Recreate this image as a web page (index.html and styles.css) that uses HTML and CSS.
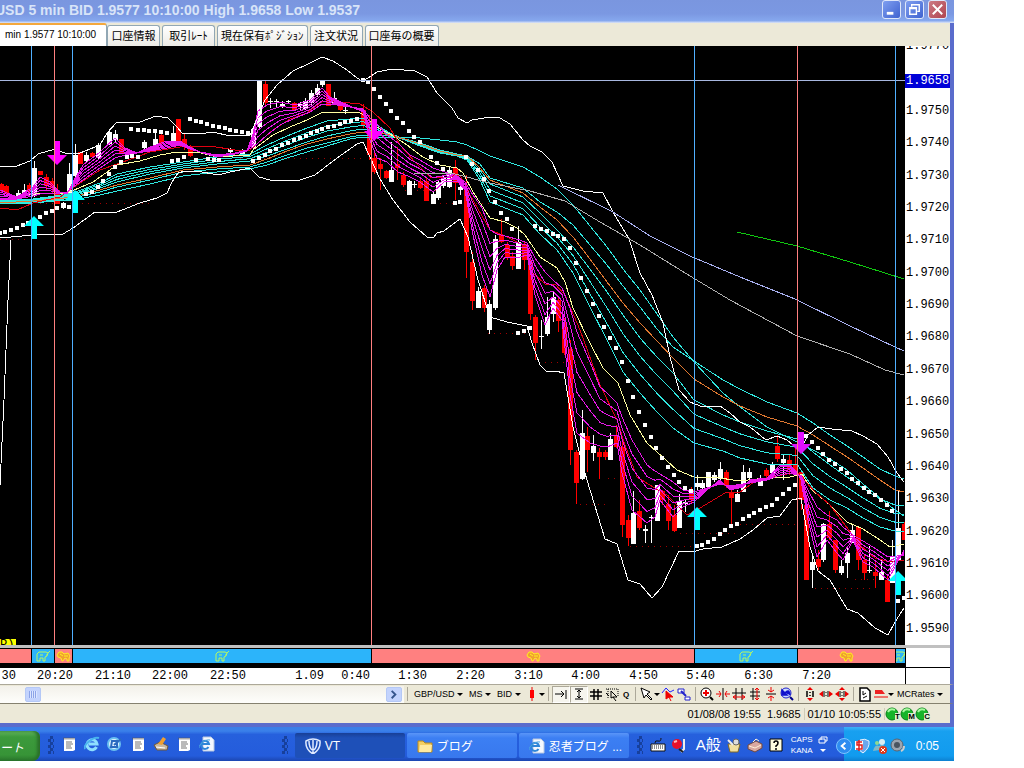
FILE: index.html
```
<!DOCTYPE html>
<html lang="ja">
<head>
    <meta charset="UTF-8">
    <meta name="viewport" content="width=device-width, initial-scale=1.0">
    <title>VT</title>
    <link rel="stylesheet" href="styles.css">
</head>
<body>
    <svg class="defs" aria-hidden="true">
        <symbol id="bull" viewBox="0 0 15 12"><path d="M1 11V4l2-2h7l2 1 2-2M12 3l-1 3-2 1v4H7V8H4v3H1M4 5h3M10 5h1" fill="none" stroke="#b8f860"/></symbol>
        <symbol id="bear" viewBox="0 0 15 12"><path d="M1 5l2-3h3l2 2 4-1 2 3-1 2v3h-2V9l-2-1-2 3H6L5 8 2 7zM4 4l3 2M8 6l4 0" fill="#f0a030" stroke="#ffee20"/></symbol>
        <symbol id="note" viewBox="0 0 16 16"><path d="M3 2h11v12l-2 1H3z" fill="#fff"/><path d="M3 1.500v2M5 1.500v2M7 1.500v2M9 1.500v2M11 1.500v2M13 1.500v2" stroke="#555"/><path d="M5 6h6M5 8h7M5 10h5M5 12h6" stroke="#777"/></symbol>
        <symbol id="ie" viewBox="0 0 16 16"><path d="M12.500 11A5 5 0 1 1 13 8H5" fill="none" stroke="#8fe0ff" stroke-width="3"/><path d="M1 13C-1 9 9 0 15 2" fill="none" stroke="#49b4ee" stroke-width="2"/></symbol>
        <symbol id="iepage" viewBox="0 0 16 16"><path d="M4 1h8l3 3v11H4z" fill="#f4f8ff" stroke="#b8c8e0"/><path d="M9.500 11A4 4 0 1 1 10 8H3" fill="none" stroke="#2f86d8" stroke-width="2"/><path d="M0 12C0 8 6 3 11 4" fill="none" stroke="#49a4e0"/></symbol>
        <symbol id="lamp" viewBox="0 0 15 14"><circle cx="7" cy="7" r="6" fill="#16b42a" stroke="#088018"/><path d="M3 5q2-4 7-2" stroke="#a8f8a0" stroke-width="2" fill="none"/></symbol>
    </svg>

    <main class="window">
        <header class="titlebar">
            <h1>USD 5 min BID 1.9577 10:10:00 High 1.9658 Low 1.9537</h1>
            <div class="winButtons">
                <button class="winBtn" aria-label="Minimize"><svg viewBox="0 0 18 18"><path d="M4 13h7" stroke="#fff" stroke-width="3"/></svg></button>
                <button class="winBtn" aria-label="Restore"><svg viewBox="0 0 18 18"><path d="M6 6V4h8v7h-2M4 7h7v7H4zM4 8h7M6 4h8" fill="none" stroke="#fff" stroke-width="1.500"/></svg></button>
                <button class="winBtn close" aria-label="Close"><svg viewBox="0 0 18 18"><path d="M4 4l10 10M14 4L4 14" stroke="#fff" stroke-width="2"/></svg></button>
            </div>
        </header>

        <nav class="tabs">
            <button class="tab active">min 1.9577 10:10:00</button>
            <button class="tab">口座情報</button>
            <button class="tab">取引ﾚｰﾄ</button>
            <button class="tab">現在保有ﾎﾟｼﾞｼｮﾝ</button>
            <button class="tab">注文状況</button>
            <button class="tab">口座毎の概要</button>
        </nav>

        <section class="chart">
            <div class="plot">
                <svg id="plot" viewBox="0 46 905 599" preserveAspectRatio="none"></svg>
                <span class="legend">P)</span>
            </div>
            <div class="prices">
                <ol>
                    <li>1.9770</li><li></li><li>1.9750</li><li>1.9740</li><li>1.9730</li>
                    <li>1.9720</li><li>1.9710</li><li>1.9700</li><li>1.9690</li><li>1.9680</li>
                    <li>1.9670</li><li>1.9660</li><li>1.9650</li><li>1.9640</li><li>1.9630</li>
                    <li>1.9620</li><li>1.9610</li><li>1.9600</li><li>1.9590</li>
                </ol>
                <span class="current">1.9658</span>
            </div>
            <div class="splitter"></div>
            <ul class="trend">
                <li class="down"></li>
                <li class="up"><svg><use href="#bull"/></svg></li>
                <li class="down"><svg><use href="#bear"/></svg></li>
                <li class="up"><svg><use href="#bull"/></svg></li>
                <li class="down"><svg><use href="#bear"/></svg></li>
                <li class="up"><svg><use href="#bull"/></svg></li>
                <li class="down"><svg><use href="#bear"/></svg></li>
                <li class="up"><svg><use href="#bull"/></svg></li>
            </ul>
            <div class="corner"></div>
            <ol class="times">
                <li>30</li><li>20:20</li><li>21:10</li><li>22:00</li><li>22:50</li>
                <li>1.09</li><li>0:40</li><li>1:30</li><li>2:20</li><li>3:10</li>
                <li>4:00</li><li>4:50</li><li>5:40</li><li>6:30</li><li>7:20</li>
            </ol>
            <div class="corner low"></div>
        </section>

        <div class="toolbar">
            <div class="scroll">
                <button class="thumb" aria-label="Scroll position"></button>
                <button class="arrow" aria-label="Scroll right"><svg viewBox="0 0 15 15"><path d="M5 3l4 4-4 4" fill="none" stroke="#35558c" stroke-width="2"/></svg></button>
            </div>
            <i class="sep"></i>
            <label class="drop"><select aria-label="Pair"><option>GBP/USD</option></select></label>
            <label class="drop"><select aria-label="Source"><option>MS</option></select></label>
            <label class="drop"><select aria-label="Price"><option>BID</option></select></label>
            <button class="tool caret" aria-label="Candles"><svg viewBox="0 0 16 16"><path d="M8 1v14" stroke="#e00"/><path d="M6 4h4v8H6z" fill="#f00"/></svg></button>
            <i class="sep"></i>
            <button class="tool pressed" aria-label="Shift"><svg viewBox="0 0 16 16"><path d="M2 8h9M8 5l3 3-3 3M13 4v9" fill="none" stroke="#000"/></svg></button>
            <button class="tool pressed" aria-label="Fit height"><svg viewBox="0 0 16 16"><path d="M4 3h8M4 13h8M8 4v8M6 6l2-2 2 2M6 10l2 2 2-2" fill="none" stroke="#000"/></svg></button>
            <button class="tool" aria-label="Grid"><svg viewBox="0 0 16 16"><path d="M6 3v11M10 3v11M2 6h12M2 10h12" stroke="#000" stroke-width="1.500"/></svg></button>
            <button class="tool" aria-label="Select area"><svg viewBox="0 0 16 16"><path d="M2 3h12v8M4 3v10" fill="none" stroke="#000" stroke-dasharray="1 1"/><path d="M7 5l6 6H9l3 4M7 5v7l2-1M2 7l3 3" fill="none" stroke="#000"/></svg></button>
            <button class="tool q">Q</button>
            <i class="sep"></i>
            <button class="tool caret" aria-label="Cursor"><svg viewBox="0 0 16 16"><path d="M2 2l9 4-3 2 5 5-1 1-5-5-2 3z" fill="#fff" stroke="#000"/></svg></button>
            <button class="tool" aria-label="Draw line"><svg viewBox="0 0 16 16"><path d="M2 7l4-5 4 4 4-2" fill="none" stroke="#22f"/><path d="M6 5l7 6H9l2 4M6 5v8l3-2" fill="#e00" stroke="#e00"/></svg></button>
            <button class="tool" aria-label="Objects"><svg viewBox="0 0 16 16"><path d="M2 3h6v4H2zM9 11h5v3H9z" fill="#fff" stroke="#22c"/><path d="M5 5l5 5" stroke="#22c" stroke-width="2"/></svg></button>
            <i class="sep"></i>
            <button class="tool" aria-label="Zoom"><svg viewBox="0 0 16 16"><circle cx="7" cy="7" r="5" fill="#fff" stroke="#000"/><path d="M4 7h6M7 4v6" stroke="#e00" stroke-width="2"/><path d="M11 11l3 3" stroke="#000" stroke-width="2"/></svg></button>
            <button class="tool" aria-label="Narrow"><svg viewBox="0 0 16 16"><path d="M8 2v12" stroke="#000"/><path d="M1 8h5M4 5l2 3-2 3M15 8h-5M12 5l-2 3 2 3" fill="none" stroke="#e00"/></svg></button>
            <button class="tool" aria-label="Widen"><svg viewBox="0 0 16 16"><path d="M5 2v12M11 2v12M1 7h14" stroke="#000"/><path d="M2 11h12M5 9l-3 2 3 2M11 9l3 2-3 2" fill="none" stroke="#e00"/></svg></button>
            <button class="tool" aria-label="Taller"><svg viewBox="0 0 16 16"><path d="M3 6h10M3 10h10M6 2v12" stroke="#000"/><path d="M10 2v12M8 4l2-2 2 2M8 12l2 2 2-2" fill="none" stroke="#e00"/></svg></button>
            <button class="tool" aria-label="Shorter"><svg viewBox="0 0 16 16"><path d="M3 8h10" stroke="#000"/><path d="M8 1v5M5 4l3 2 3-2M8 15v-5M5 12l3-2 3 2" fill="none" stroke="#e00"/></svg></button>
            <button class="tool" aria-label="Undo zoom"><svg viewBox="0 0 16 16"><circle cx="7" cy="7" r="5" fill="#cdf" stroke="#22c"/><path d="M3 4v5h5zM6 7q4-5 5 2" fill="#11c" stroke="#11c" stroke-width="1.500"/><path d="M11 11l3 3" stroke="#008" stroke-width="2"/></svg></button>
            <i class="sep"></i>
            <button class="tool" aria-label="Reset vertical"><svg viewBox="0 0 16 16"><path d="M8 1l3 3H5zM8 15l3-3H5z" fill="#e00"/><path d="M5 5v6M11 5v6M8 6v1M8 9v1" stroke="#000" stroke-width="1.500"/></svg></button>
            <button class="tool" aria-label="Reset horizontal"><svg viewBox="0 0 16 16"><path d="M1 8l4-3v6zM15 8l-4-3v6z" fill="#e00"/><path d="M6 5v6M10 5v6M8 6v1M8 9v1" stroke="#000"/></svg></button>
            <button class="tool" aria-label="Reset all"><svg viewBox="0 0 16 16"><path d="M1 8l4-3v6zM15 8l-4-3v6zM8 1l3 3H5zM8 15l3-3H5z" fill="#e00"/><path d="M6 5v6M10 5v6M8 6v1M8 9v1" stroke="#000"/></svg></button>
            <i class="sep"></i>
            <button class="tool" aria-label="Properties"><svg viewBox="0 0 16 16"><path d="M3 2h7l3 3v10H3z" fill="#fff" stroke="#000" stroke-width="1.500"/><path d="M6 5v4l3-2M6 12l4-2" fill="none" stroke="#000"/></svg></button>
            <button class="tool caret" aria-label="Pen"><svg viewBox="0 0 16 16"><path d="M2 4h7l3 4H2z" fill="#e22"/><path d="M1 11h14" stroke="#e00"/></svg></button>
            <label class="drop"><select aria-label="Rates"><option>MCRates</option></select></label>
        </div>

        <footer class="status">
            <span>01/08/08 19:55&nbsp; 1.9685</span>
            <span>01/10 10:05:55</span>
            <b class="lamp"><svg><use href="#lamp"/></svg><em>T</em></b>
            <b class="lamp"><svg><use href="#lamp"/></svg><em>M</em></b>
            <b class="lamp"><svg><use href="#lamp"/></svg><em>C</em></b>
        </footer>
    </main>

    <div class="taskbar">
        <button class="start">ート</button>
        <i class="grip"></i>
        <div class="quick">
            <a href="#" aria-label="Notes"><svg><use href="#note"/></svg></a>
            <a href="#" aria-label="Internet Explorer"><svg><use href="#ie"/></svg></a>
            <a href="#" aria-label="Mail"><svg viewBox="0 0 16 16"><circle cx="7" cy="8" r="6" fill="#dff2ff" stroke="#6bc0f0" stroke-width="2"/><path d="M5 5h5v6H4zM7 9l7-6" fill="none" stroke="#2a6ac0" stroke-width="2"/></svg></a>
            <a href="#" aria-label="Notes"><svg><use href="#note"/></svg></a>
            <a href="#" aria-label="Desktop"><svg viewBox="0 0 16 16"><path d="M1 9l6-3 8 4-1 4H4z" fill="#c8b8a0" stroke="#705838"/><path d="M5 8l5-7 3 2-4 6z" fill="#f0a030"/><path d="M3 11l9 1" stroke="#fff"/></svg></a>
            <a href="#" aria-label="Notes"><svg><use href="#note"/></svg></a>
            <a href="#" aria-label="Web page"><svg><use href="#iepage"/></svg></a>
        </div>
        <i class="grip"></i>
        <div class="tasks">
            <button class="task on"><svg viewBox="0 0 16 16"><path d="M1 3q7-4 14 0 1 8-7 13Q0 11 1 3zM4 3q0 6 3 9M12 3q0 6-3 9M8 2v13" fill="none" stroke="#dfeaff" stroke-width="1.500"/></svg>VT</button>
            <button class="task"><svg viewBox="0 0 16 16"><path d="M1 3h5l2 2h7v9H1z" fill="#f4cf62" stroke="#b88a20"/><path d="M3 7h12l-1 7H2z" fill="#ffeaa0"/></svg>ブログ</button>
            <button class="task"><svg><use href="#iepage"/></svg>忍者ブログ ...</button>
        </div>
        <i class="grip"></i>
        <div class="lang">
            <svg viewBox="0 0 16 16"><path d="M1 7h14v7H1z" fill="#fff" stroke="#111"/><path d="M2 9h12M2 11h12" stroke="#222" stroke-dasharray="1 1"/><path d="M5 6q0-3 3-2t3-3" fill="none" stroke="#111"/></svg>
            <svg viewBox="0 0 16 16"><circle cx="6" cy="7" r="5" fill="#e8102a"/><path d="M3 5l3-1" stroke="#fbb" stroke-width="2"/><path d="M13 2v10l-3 3" stroke="#eee" stroke-width="2" fill="none"/><path d="M8 12l4 3" stroke="#222" stroke-width="2"/></svg>
            <span class="mode">A般</span>
            <svg viewBox="0 0 16 16"><path d="M2 7h12l-2 8H4z" fill="#f0dfa0" stroke="#806828"/><circle cx="10" cy="5" r="3" fill="#ddd" stroke="#666"/><path d="M2 3l5 5" stroke="#eee" stroke-width="2"/></svg>
            <svg viewBox="0 0 16 16"><path d="M1 8l8-4 6 3v4l-7 4-7-3z" fill="#d9a8a0" stroke="#704840"/><path d="M2 9l6 2 6-3M6 5l3-3 3 2" fill="none" stroke="#fff0d8"/></svg>
            <svg viewBox="0 0 16 16"><path d="M2 2h12v12H2z" fill="#fffde0" stroke="#000"/><path d="M6 6q0-2 2-2t2 2-2 3v1M8 11v2" fill="none" stroke="#000" stroke-width="1.500"/></svg>
            <span class="caps">CAPS<br>KANA</span>
            <svg class="mini" viewBox="0 0 10 18"><path d="M3 4V1h6v4H7M1 3h6v4H1z" fill="none" stroke="#fff"/><path d="M2 13h6l-3 3z" fill="#fff"/></svg>
        </div>
        <div class="tray">
            <button class="chevron" aria-label="Show icons"><svg viewBox="0 0 15 15"><path d="M9 4L5 7.500 9 11" fill="none" stroke="#fff" stroke-width="2"/></svg></button>
            <svg viewBox="0 0 16 16"><path d="M6 2q5-2 9 1 1 7-6 12-4-2-5-6z" fill="#6aa8ee" stroke="#e8f2ff"/><path d="M1 3h8v9H1z" fill="#fff"/><path d="M8 4H3v3h5v4H2M5 2v11" fill="none" stroke="#e02020" stroke-width="1.500"/></svg>
            <svg viewBox="0 0 16 16"><circle cx="10" cy="4" r="3" fill="#d8eef4"/><circle cx="5" cy="5" r="2" fill="#90d890"/><path d="M1 13q2-7 6-5 5-3 7 3z" fill="#80b8c8"/><circle cx="11" cy="12" r="4" fill="#e03818"/><path d="M9 10l4 4M13 10l-4 4" stroke="#fff"/></svg>
            <svg viewBox="0 0 16 16"><circle cx="7" cy="7" r="6" fill="#9aa4b0" stroke="#5a6470"/><circle cx="7" cy="7" r="3" fill="#4a5460"/><path d="M11 13q3-1 3-5" fill="none" stroke="#ccc" stroke-width="2"/></svg>
            <time>0:05</time>
        </div>
    </div>

    <script src="chart.js"></script>
</body>
</html>
```
FILE: styles.css
```
*{
 box-sizing: border-box;
}
body{
 margin: 0;
 padding: 0 70px 7px 0;
 min-height: 100vh;
 display: flex;
 flex-direction: column;
 background-color: white;
 font-family: "Liberation Sans", "Noto Sans CJK JP", sans-serif;
 font-size: 12px;
}
button, select{
 font-family: inherit;
 font-size: inherit;
 border: none;
 padding: 0;
 background: none;
 color: inherit;
}
ul, ol{
 list-style: none;
 margin: 0;
 padding: 0;
}
svg{
 display: block;
 flex: none;
}
.defs{
 position: absolute;
 width: 0;
 height: 0;
}
.window{
 flex: 1;
 display: flex;
 flex-direction: column;
 border-bottom: 4px solid #5a6ccc;
}

/* title bar */
.titlebar{
 height: 23px;
 display: flex;
 justify-content: space-between;
 overflow: hidden;
 background: linear-gradient(#7a96df, #7b98e2 60%, #86a8ee 90%, #dfe6f6);
}
.titlebar h1{
 margin: 0 0 0 -5px;
 font-size: 14px;
 line-height: 20px;
 color: #d8e4f8;
 white-space: nowrap;
}
.winButtons{
 display: flex;
 gap: 4px;
 padding-right: 7px;
}
.winBtn{
 width: 19px;
 height: 19px;
 border: 1px solid #dfe8fa;
 border-radius: 3px;
 background: linear-gradient(135deg, #7f9ff0, #3e62d0);
}
.winBtn.close{
 background: linear-gradient(135deg, #cc7a84, #b04450);
}

/* tabs */
.tabs{
 height: 23px;
 display: flex;
 gap: 2px;
 padding-top: 2px;
 background-color: #ece9d8;
 border-right: 4px solid #5a6ccc;
}
.tab{
 padding: 0 3px;
 border: 1px solid #91a7b4;
 border-bottom: none;
 border-radius: 3px 3px 0 0;
 background: linear-gradient(#fff, #ecebe6);
 font-size: 11px;
 line-height: 20px;
 white-space: nowrap;
 color: #000;
 min-width: 53px;
}
.tab.active{
 width: 107px;
 margin: -2px -2px 0 0;
 padding: 0 0 3px 5px;
 border-top: 2px solid #f4a83c;
 border-left: none;
 border-radius: 0 3px 0 0;
 background: #fff;
 font-size: 10px;
 text-align: left;
}

/* chart area */
.chart{
 flex: 1;
 display: grid;
 grid-template-columns: 1fr 45px;
 grid-template-rows: 1fr 3px 20px 16px;
 border-right: 4px solid #5a6ccc;
 font-family: "Liberation Mono", monospace;
 font-size: 12px;
}
.plot{
 position: relative;
 min-height: 400px;
 background-color: #000;
}
.plot > svg{
 position: absolute;
 width: 100%;
 height: 100%;
}
.legend{
 position: absolute;
 left: 0;
 bottom: 0;
 width: 16px;
 height: 6px;
 overflow: hidden;
 background-color: #ff0;
 line-height: 12px;
}
.prices{
 position: relative;
 display: flex;
 overflow: hidden;
 background-color: #fff;
}
.prices ol{
 flex: 1;
 display: grid;
 grid-auto-rows: 1fr;
 align-items: center;
 margin: -16px 0 0;
}
.prices li{
 line-height: 14px;
 padding-left: 1px;
}
.current{
 position: absolute;
 top: 28px;
 left: 0;
 right: 0;
 padding-left: 1px;
 line-height: 14px;
 background-color: #0000d8;
 color: #fff;
}
.splitter{
 grid-column: 1 / 3;
 background-color: #c0c0c0;
}
.trend{
 display: grid;
 grid-template-columns: 31fr 23fr 18fr 299fr 323fr 103fr 98fr 10fr;
 background-color: #000;
}
.trend li{
 display: flex;
 justify-content: center;
 min-width: 0;
 overflow: hidden;
 padding: 1px 0 5px;
 background-clip: content-box;
 border-left: 1px solid;
}
.trend li:first-child{
 border: none;
}
.trend svg{
 width: 15px;
 height: 12px;
 margin-top: 1px;
}
.up{
 background-color: #2cb4fa;
 border-color: #50b4ff;
}
.down{
 background-color: #ff8080;
 border-color: #ff8080;
}
.corner{
 background-color: #fff;
 border-left: 1px solid #000;
 border-bottom: 1px solid #000;
}
.corner.low{
 border-bottom: none;
}
.times{
 display: grid;
 grid-template-columns: 16fr 57fr 58fr 57fr 58fr 78fr 46fr 57fr 58fr 58fr 57fr 58fr 57fr 58fr 58fr 74fr;
 background-color: #fff;
 line-height: 17px;
 text-align: right;
}

/* toolbar */
.toolbar{
 height: 20px;
 display: flex;
 align-items: center;
 padding-right: 4px;
 background-color: #ece9d8;
 border-top: 1px solid #aca899;
 border-bottom: 1px solid #85816f;
 border-right: 4px solid #5a6ccc;
 font-size: 9px;
}
.scroll{
 flex: 1;
 display: flex;
 justify-content: space-between;
 padding: 1px 2px 1px 25px;
 background: linear-gradient(#f3f1ea, #fefefb);
}
.thumb, .arrow{
 width: 16px;
 height: 15px;
 border: 1px solid #b4c8f6;
 border-radius: 2px;
 background-color: #c3d3fd;
}
.thumb{
 background: repeating-linear-gradient(90deg, #8ca4e8 0 1px, #dce6ff 1px 2px) center / 8px 7px no-repeat #c3d3fd;
}
.sep{
 width: 1px;
 height: 14px;
 margin: 0 3px;
 background-color: #aca899;
}
.drop{
 display: flex;
 align-items: center;
 margin: 0 3px 0 3px;
}
.drop select{
 appearance: none;
 outline: none;
}
.drop::after, .caret::after{
 content: "";
 margin-left: 2px;
 border: 3px solid transparent;
 border-top-color: #000;
 border-bottom: none;
}
.tool{
 width: 16px;
 height: 17px;
 display: flex;
 align-items: center;
 justify-content: center;
}
.tool svg{
 width: 16px;
 height: 16px;
}
.tool.pressed{
 width: 18px;
 border: 1px solid #aca899;
 border-right-color: #fff;
 border-bottom-color: #fff;
 background-color: #f6f5ee;
}
.tool.caret{
 width: 21px;
}
.tool.caret::after{
 margin-left: -1px;
}
.tool.q{
 width: 12px;
 font-weight: bold;
 font-size: 8px;
}

/* status bar */
.status{
 height: 19px;
 display: flex;
 align-items: center;
 justify-content: flex-end;
 padding-right: 20px;
 background-color: #ece9d8;
 border-right: 4px solid #5a6ccc;
 font-size: 11px;
}
.status span{
 padding: 0 3px;
 border-right: 1px solid #d0ccb8;
 white-space: nowrap;
}
.lamp{
 position: relative;
}
.lamp svg{
 width: 15px;
 height: 14px;
}
.lamp em{
 position: absolute;
 right: 0;
 bottom: 0;
 font-style: normal;
 font-size: 8px;
 line-height: 8px;
 color: #000;
 background-color: #d8f0d0;
}

/* taskbar */
.taskbar{
 height: 34px;
 display: flex;
 align-items: center;
 background: linear-gradient(#3a7fe8, #3a80ea 12%, #2660dd 22%, #245cdc 85%, #1c46b0);
 color: #fff;
}
.taskbar svg{
 width: 16px;
 height: 16px;
}
.start{
 align-self: flex-end;
 width: 40px;
 height: 30px;
 padding-right: 16px;
 border-radius: 0 6px 8px 0;
 background: linear-gradient(#62b35c, #3c9a3c 20%, #379437 80%, #2a742c);
 box-shadow: inset -3px 0 3px #2a702a;
 font-style: italic;
 white-space: nowrap;
}
.grip{
 width: 6px;
 height: 18px;
 margin: 2px 7px 0 8px;
 background: repeating-conic-gradient(#17409c 0 25%, transparent 0 50%) 0 0 / 5px 6px;
}
.quick{
 flex: 1;
 display: flex;
 gap: 7px;
}
.tasks{
 display: flex;
 gap: 2px;
 align-self: flex-end;
 padding-bottom: 3px;
}
.task{
 width: 110px;
 height: 25px;
 display: flex;
 align-items: center;
 gap: 4px;
 padding-left: 10px;
 border-radius: 2px;
 background: linear-gradient(#5a95f8, #3c7ff3 20%, #3878ee);
 white-space: nowrap;
}
.task.on{
 background: linear-gradient(#183f96, #1e50b8 20%);
}
.lang{
 display: flex;
 align-items: center;
 gap: 5px;
 padding: 2px 16px 0 0;
}
.mode{
 padding-left: 4px;
 font-size: 15px;
 line-height: 18px;
 white-space: nowrap;
}
.caps{
 padding-left: 2px;
 font-size: 8px;
 line-height: 11px;
}
.lang .mini{
 width: 10px;
 height: 18px;
}
.tray{
 align-self: stretch;
 position: relative;
 display: flex;
 align-items: center;
 gap: 2px;
 padding: 4px 15px 0 10px;
 background: linear-gradient(#3fb0f8, #18a0f0 12%, #119bee 85%, #0d80d0);
}
.chevron{
 position: absolute;
 left: -8px;
 top: 11px;
 width: 16px;
 height: 16px;
 border-radius: 50%;
 background-color: #2d8cf0;
 border: 1px solid #7cc4ff;
}
.chevron svg{
 width: 14px;
 height: 14px;
}
.tray time{
 margin-left: 8px;
}
```
FILE: chart.js
```
const plot = document.getElementById("plot");
const NS = "http://www.w3.org/2000/svg";

function add(tag, attrs) {
    const el = document.createElementNS(NS, tag);
    for (const key in attrs) el.setAttribute(key, attrs[key]);
    plot.appendChild(el);
}

function line(points, color, extra) {
    add("polyline", Object.assign({ points: points, fill: "none", stroke: color, "shape-rendering": "crispEdges" }, extra));
}

// each row: x, then the y of every average
function column(rows, n) {
    return rows.map(r => r[0] + "," + r[n]).join(" ");
}

function between(rows, a, b, t) {
    return rows.map(r => r[0] + "," + (r[a] + (r[b] - r[a]) * t)).join(" ");
}

// x, high, body top, body bottom, low
const white = [
    [18,190,193,197,198],[24,184,190,196,197],[34,161,168,196,197],[63,202,203,208,209],[69,163,174,193,196],
    [75,144,155,176,178],[86,152,155,161,163],[98,143,145,158,160],[109,130,132,144,145],[115,130,134,140,142],
    [144,140,142,148,150],[155,130,139,146,148],[173,126,133,141,142],[230,148,149,152,154],[242,149,150,154,155],
    [253,126,129,148,150],[259,81,81,127,128],[270,98,101,102,108],[276,99,101,102,108],[282,101,104,106,108],
    [288,100,101,102,103],[300,102,104,106,110],[305,98,101,109,110],[311,90,93,103,105],[317,84,88,95,97],
    [322,80,81,85,87],[334,92,98,104,105],[345,106,110,111,114],[391,142,170,182,182],[409,180,181,195,195],
    [414,181,184,185,188],[433,191,194,204,204],[438,180,182,198,200],[443,175,178,186,188],[449,166,170,187,188],
    [460,185,187,190,195],[478,287,291,308,308],[489,300,304,330,334],[495,235,239,308,310],[518,226,242,269,269],
    [541,320,336,337,349],[547,297,317,334,336],[553,291,297,314,322],[582,410,433,479,480],[593,435,446,453,461],
    [610,433,439,460,460],[633,491,513,544,544],[645,525,529,531,543],[651,515,517,518,543],[657,485,485,521,521],
    [679,494,501,528,528],[685,500,502,504,512],[697,475,483,487,490],[702,480,483,488,489],[708,472,472,487,487],
    [714,472,475,480,482],[720,462,469,479,480],[737,490,494,502,502],[743,465,472,492,492],[749,468,472,478,480],
    [760,475,480,486,486],[772,462,465,473,473],[783,455,459,463,480],[812,555,562,570,588],[823,523,524,560,562],
    [841,560,566,573,575],[847,546,553,563,578],[852,525,530,543,543],[869,546,570,571,573],[881,560,572,580,580],
    [892,540,556,583,583],[898,490,528,560,560]
];
const red = [
    [1,183,184,191,193],[6,185,186,194,195],[29,183,185,192,194],[40,171,171,175,175],[46,174,177,186,190],
    [52,178,181,188,193],[57,184,190,204,204],[80,152,152,164,164],[92,152,153,157,158],[121,139,139,153,154],
    [161,134,135,143,144],[178,119,119,141,143],[184,134,139,146,150],[190,145,147,156,157],[265,80,84,103,105],
    [294,102,103,110,110],[328,84,84,106,106],[340,102,103,110,111],[363,104,110,125,128],[369,115,128,155,160],
    [374,150,158,172,174],[380,158,164,169,190],[386,170,171,178,179],[397,147,164,168,180],[403,172,175,185,187],
    [420,178,181,188,189],[426,178,181,201,201],[455,160,168,183,200],[466,175,190,252,278],[472,252,262,301,310],
    [484,285,288,308,312],[501,219,235,242,243],[507,242,245,258,260],[512,252,256,266,270],[524,242,244,260,270],
    [530,260,262,314,320],[535,315,317,343,360],[558,297,300,321,332],[564,318,322,353,355],[570,340,349,450,465],
    [576,450,452,483,504],[587,427,436,450,472],[599,448,452,457,479],[605,450,452,457,460],[616,425,436,447,448],
    [622,440,447,525,537],[628,515,520,538,546],[639,500,511,528,530],[662,490,491,500,505],[668,495,504,521,530],
    [674,505,515,531,532],[691,487,490,500,503],[726,470,472,486,488],[731,490,493,498,526],[766,468,470,476,478],
    [777,435,446,459,462],[789,455,460,470,475],[795,447,465,475,475],[801,472,472,500,510],[806,500,505,580,580],
    [818,550,559,567,570],[829,511,524,538,540],[835,540,540,570,573],[858,526,527,560,570],[864,555,560,573,580],
    [875,562,572,576,588],[887,575,580,602,602],[904,522,524,540,540]
];

function candles(list, color) {
    for (const [x, high, top, bottom, low] of list) {
        add("rect", { x: x, y: high, width: 1, height: low - high, fill: color });
        add("rect", { x: x - 2, y: top, width: 5, height: bottom - top, fill: color });
    }
}

// slow averages: x, slowest, second, orange, third, fastest
const slow = [
    [0,204,203,203,202,201],[33,203,202,201,201,199],[55,201,200,199,198,196],[73,200,198,197,196,193],
    [100,195,192,190,188,183],[117,191,187,185,182,174],[150,184,180,178,174,167],[183,176,172,170,168,162],
    [217,172,169,167,164,157],[250,169,167,165,161,154],[267,165,162,159,156,145],[287,158,155,151,149,136],
    [307,152,148,144,142,128],[327,146,143,139,136,121],[350,139,137,134,131,119],[363,137,135,132,129,118],
    [375,137,135,132,131,124],[390,138,136,135,135,133],[405,137,139,139,140,140],[420,138,143,144,145,146],
    [440,140,150,151,152,153],[457,142,154,155,155,156],[467,145,156,156,157,160],[480,151,164,168,170,180],
    [490,156,178,180,184,202],[523,167,188,193,197,215],[540,177,202,207,213,234],[557,189,212,220,230,250],
    [573,205,225,237,247,273],[590,226,245,259,269,307],[607,247,265,282,292,340],[623,269,286,303,315,372],
    [640,290,307,323,338,393],[657,314,329,341,357,412],[673,337,347,358,373,428],[694,362,361,379,400,443],
    [723,393,380,397,415,451],[740,407,389,406,422,458],[767,427,402,417,431,464],[797,442,413,426,439,464],
    [813,450,423,435,452,488],[830,459,435,446,465,500],[847,470,446,457,477,508],[863,484,457,468,488,518],
    [880,498,469,480,499,527],[895,510,476,490,505,531],[904,516,479,492,506,531]
];

// fast averages: x, slowest, fastest
const fast = [
    [0,200,190],[17,199,197],[33,196,187],[40,194,177],[50,193,182],[60,193,192],[67,192,194],[73,187,182],
    [83,180,165],[100,168,152],[115,158,138],[125,155,148],[137,153,153],[150,151,147],[167,148,141],[180,145,141],
    [190,149,147],[200,152,152],[217,155,157],[235,153,154],[247,150,151],[253,147,134],[258,143,111],[267,135,105],
    [280,125,102],[295,118,105],[310,112,100],[322,104,88],[330,104,97],[350,107,106],[363,109,112],[370,118,140],
    [377,124,158],[387,135,162],[398,143,172],[410,155,177],[420,160,182],[433,168,192],[445,172,181],[457,176,181],
    [465,182,190],[473,195,235],[482,208,275],[490,230,297],[497,234,270],[505,236,257],[520,240,257],[527,243,255],
    [535,258,295],[545,272,325],[553,280,308],[562,288,320],[570,308,395],[577,332,433],[590,362,443],[600,387,446],
    [607,393,447],[617,403,443],[622,417,473],[632,440,510],[647,465,523],[655,471,517],[660,474,500],[673,482,517],
    [683,490,507],[694,492,502],[707,488,490],[720,484,480],[730,486,490],[743,484,487],[750,483,480],[767,480,478],
    [780,475,465],[790,473,465],[797,475,472],[801,475,480],[808,490,520],[817,507,557],[827,515,540],[837,520,553],
    [843,527,560],[853,535,540],[863,541,562],[873,547,567],[888,557,580],[897,556,563],[904,555,550]
];

// stop levels
const dots = [
    0,233,5,232,11,230,17,228,23,225,28,223,34,221,40,217,46,213,52,211,57,208,63,206,69,207,
    80,198,86,194,92,192,98,187,103,181,109,174,115,167,121,162,127,157,132,156,138,157,
    131,129,138,130,144,130,149,131,155,131,161,132,167,133,172,161,178,160,184,157,
    190,119,196,121,201,122,207,124,213,126,219,127,225,128,230,130,236,131,242,132,248,133,
    196,160,208,159,214,160,219,160,
    253,161,259,158,265,155,270,151,276,149,282,145,288,143,294,140,300,138,306,136,311,133,317,131,
    322,129,328,127,334,126,340,124,345,122,351,121,357,119,
    363,80,368,82,374,89,380,97,386,104,391,111,397,118,403,123,409,131,414,137,420,142,
    431,157,437,163,443,169,455,203,460,202,
    466,157,472,164,478,170,484,179,489,191,495,202,501,213,507,219,512,229,518,333,524,331,530,328,
    535,226,541,229,547,231,553,234,558,236,564,239,570,248,576,263,581,278,587,291,593,304,599,316,
    604,327,610,338,616,348,622,362,628,381,633,397,639,412,645,425,651,437,656,448,662,458,668,467,
    674,475,679,482,685,488,691,491,
    697,546,702,545,708,542,714,539,720,534,725,530,731,526,737,524,743,519,749,516,754,513,760,510,
    766,507,772,505,777,499,783,494,789,489,795,485,
    806,436,812,442,818,448,823,454,829,460,835,464,841,469,847,473,852,479,858,483,864,488,869,492,
    875,495,881,500,887,505,892,511,898,601,904,598
];

// faint red levels: from, to, y
const levels = [
    [0,30,239],[40,150,203],[240,365,158],[405,440,190],[440,495,203],[488,525,333],[545,590,362],[580,605,504],
    [608,620,478],[630,695,546],[680,740,533],[740,800,524],[815,870,588],[855,880,579]
];
for (const [a, b, y] of levels) {
    line(`${a},${y} ${b},${y}`, "#a00000", { "stroke-dasharray": "1 5" });
}

candles(red, "#ff0000");
candles(white, "#ffffff");

for (const n of [1, 2, 4, 5]) line(column(slow, n), "#30e8e0");
for (const t of [0.33, 0.66]) line(between(slow, 4, 5, t), "#30e8e0");
line(column(slow, 3), "#e07830");

// middle average
line("0,200 40,193 67,193 93,182 117,165 140,161 160,155 177,152 197,152 217,157 250,155 253,150 273,135 290,127 307,120 323,112 357,112 365,115 373,125 390,134 407,145 423,157 440,165 457,168 463,173 473,192 490,218 505,222 517,228 525,235 540,257 557,268 565,282 573,308 590,343 603,368 618,383 630,415 647,443 677,470 694,477 713,477 740,481 757,479 790,477 802,474 812,490 830,505 847,522 863,529 880,540 890,547 904,544", "#ffffa0");
line("0,208 17,210 33,203 60,197 80,183 100,170 120,163 150,152 180,147 210,146 235,150 250,150 273,130 290,119 307,113 323,101 340,102 360,104 373,112 390,128 400,145 415,162 430,177 447,178 460,175 470,195 490,230 505,236 523,245 533,273 545,284 555,284 565,295 580,330 600,385 617,420 625,445 637,477 653,487 667,495 687,515 700,508 725,493 740,492 757,480 797,472 815,492 830,505 845,525 860,545 875,558 890,562 904,560", "#e00010");
for (const t of [0, 0.2, 0.4, 0.6, 0.8, 1]) line(between(fast, 1, 2, t), "#e818e8");

// bands
line("0,167 17,166 30,161 38,154 55,149 67,154 80,153 100,145 107,133 117,122 140,122 156,116 168,118 177,127 182,133 200,134 213,132 230,136 250,135 253,128 260,112 265,100 277,85 293,71 308,64 322,57 333,61 347,70 357,78 362,81 368,78 377,72 392,69 415,71 427,77 437,93 452,108 458,118 467,123 472,120 490,117 500,118 510,124 523,140 530,146 542,152 552,162 563,186 583,191 603,193 613,212 629,239 640,273 652,295 663,323 670,357 679,390 690,402 703,407 720,406 730,413 740,422 750,427 766,440 777,436 787,440 800,451 808,435 818,427 832,429 852,431 863,436 877,444 888,457 897,473 904,482", "#fff");
line("0,238 33,235 63,234 73,228 95,212 117,212 140,203 157,198 167,193 172,182 178,173 185,171 197,171 218,175 230,172 250,168 259,177 270,180 300,180 315,175 337,158 357,144 363,142 370,157 380,179 393,200 410,222 427,237 433,238 437,233 444,231 460,219 468,237 478,280 490,317 507,322 527,326 532,343 540,365 547,372 555,371 564,373 573,427 580,455 587,480 605,539 617,544 628,580 640,584 652,598 662,587 679,551 692,552 703,549 722,547 740,539 753,530 767,518 780,516 792,500 801,498 805,520 810,547 818,571 830,580 847,609 858,613 875,628 888,635 895,622 904,608", "#fff");
line("0,485 4,400 8,300 11,240", "#fff");

// long averages
line("413,173 455,174 490,183 530,191 565,201 600,222 640,245 690,276 730,300 797,336 850,354 885,370 904,375", "#b0b0b0");
line("558,185 613,212 650,236 690,256 740,277 795,299 850,326 895,347 904,351", "#a8b0f0");
line("737,232 797,246 850,262 904,279", "#10c810");

for (let i = 0; i < dots.length; i += 2) {
    add("rect", { x: dots[i] - 2, y: dots[i + 1] - 2, width: 4, height: 4, fill: "#fff" });
}

// signals
function arrow(x, tip, dir, length, color) {
    add("path", { d: `M${x} ${tip}l10 ${10 * dir}h-7v${(length - 10) * dir}h-6v${(10 - length) * dir}h-7z`, fill: color });
}
arrow(57, 165, -1, 24, "#ff00ff");
arrow(374, 141, -1, 22, "#ff00ff");
arrow(801, 454, -1, 22, "#e010ff");
arrow(34, 216, 1, 23, "#00ffff");
arrow(75, 190, 1, 23, "#00ffff");
arrow(697, 507, 1, 23, "#00ffff");
arrow(898, 571, 1, 24, "#00ffff");

line("0,80 905,80", "#a8b8e0");
for (const x of [31, 72, 694, 895]) add("rect", { x: x, y: 46, width: 1, height: 599, fill: "#50b0ff", "shape-rendering": "crispEdges" });
for (const x of [54, 371, 797]) add("rect", { x: x, y: 46, width: 1, height: 599, fill: "#ff8080", "shape-rendering": "crispEdges" });
```
